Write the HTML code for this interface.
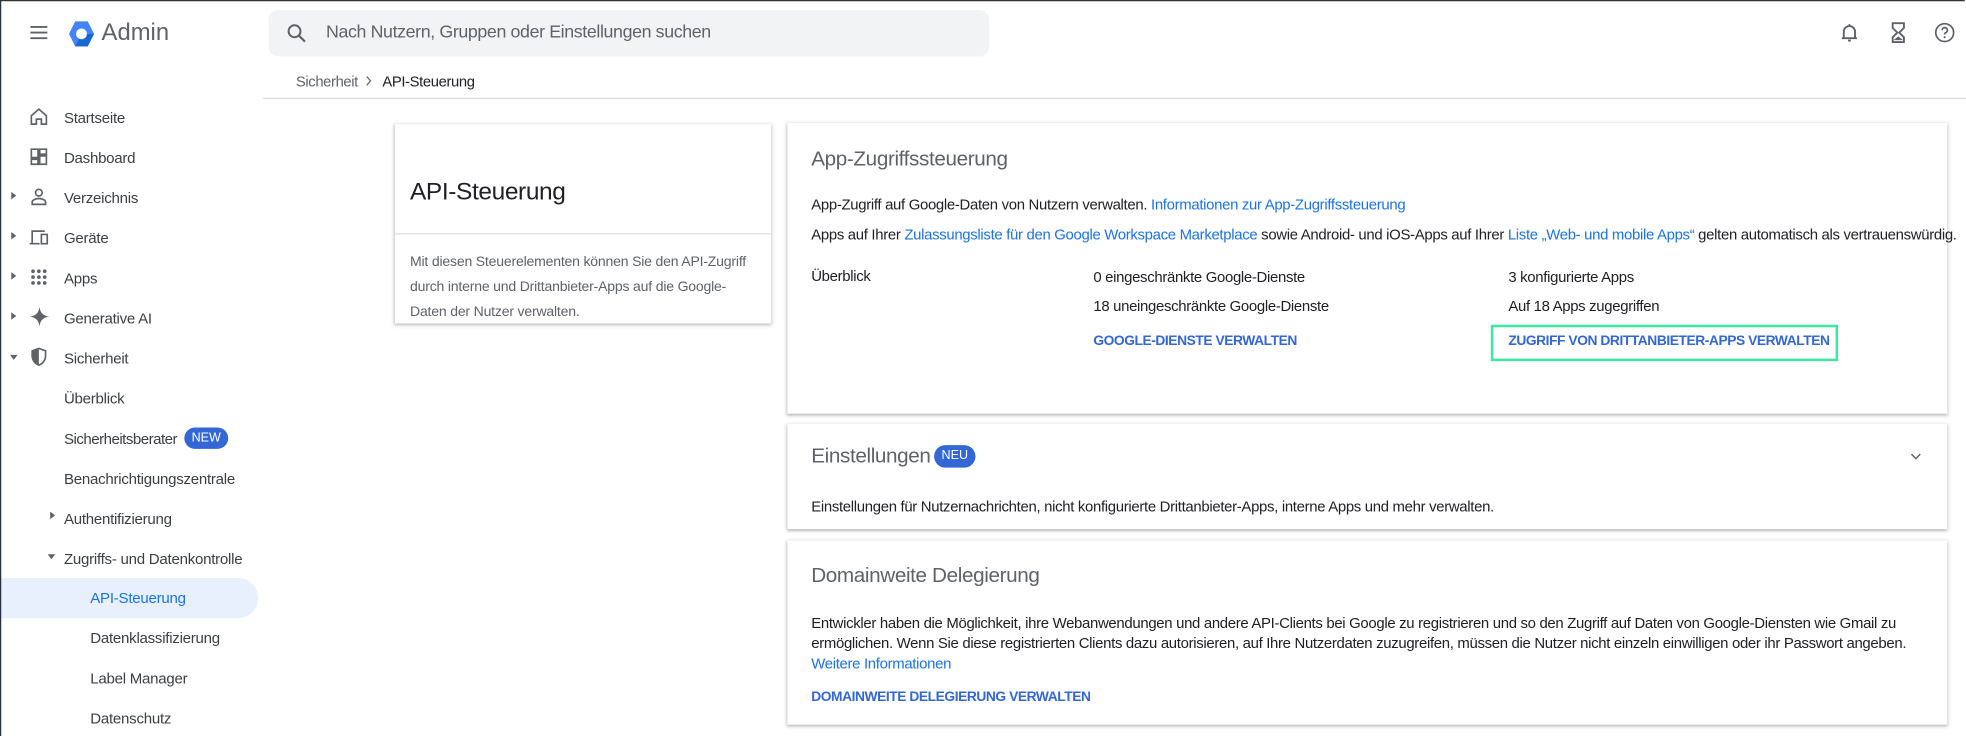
<!DOCTYPE html>
<html><head><meta charset="utf-8">
<style>
html,body{margin:0;padding:0;background:#fff;overflow:hidden}
body{width:1966px;height:737px;position:relative}
#w{position:absolute;left:0;top:0;width:1568px;height:588px;transform:scale(1.25383);transform-origin:0 0;font-family:"Liberation Sans",sans-serif;color:#202124}
.a{position:absolute;white-space:nowrap}
.frame{position:absolute;left:0;top:0;width:1566px;height:586px;border-top:1px solid #333;border-left:1.5px solid #2a3340;pointer-events:none}
.nav{font-size:12px;color:#3c4043;line-height:16px;letter-spacing:-0.2px}
.ic{position:absolute}
.tri{position:absolute;width:0;height:0;border-top:3.5px solid transparent;border-bottom:3.5px solid transparent;border-left:4px solid #5f6368}
.trid{position:absolute;width:0;height:0;border-left:3.5px solid transparent;border-right:3.5px solid transparent;border-top:4px solid #5f6368}
.card{position:absolute;background:#fff;box-shadow:0 1px 2px rgba(60,64,67,.3),0 1px 3px 1px rgba(60,64,67,.15)}
.t{font-size:11.9px;color:#202124;letter-spacing:-0.25px}
.lk{color:#1a73e8}
.btn{font-size:11px;font-weight:bold;color:#3367d6;letter-spacing:-0.35px}
.h{font-size:16.5px;color:#5f6368;letter-spacing:-0.3px}
.badge{position:absolute;background:#3367d6;color:#fff;font-size:10px;border-radius:9px;text-align:center}
</style></head><body>
<div id="w">
<!-- top bar -->
<svg class="ic" style="left:22px;top:17px" width="18" height="18" viewBox="0 0 24 24"><path d="M3 6h18M3 12h18M3 18h18" stroke="#5f6368" stroke-width="2"/></svg>
<svg class="ic" style="left:53px;top:15px" width="24" height="24" viewBox="0 0 24 24"><polygon points="7,2 17,2 22,12 17,22 7,22 2,12" fill="#4285f4"/><polygon points="12,12 22,12 17,22 7,22" fill="#1967d2"/><circle cx="12" cy="12" r="4.3" fill="#fff"/></svg>
<div class="a" style="left:81px;top:16px;font-size:19px;color:#5f6368">Admin</div>
<div class="a" style="left:214px;top:8px;width:575px;height:37px;background:#f1f3f4;border-radius:8px"></div>
<svg class="ic" style="left:227px;top:17px" width="19" height="19" viewBox="0 0 24 24"><circle cx="10" cy="10" r="6" fill="none" stroke="#5f6368" stroke-width="2"/><path d="M14.5 14.5l6 6" stroke="#5f6368" stroke-width="2.2"/></svg>
<div class="a" style="left:260px;top:18px;font-size:14.2px;color:#5f6368;letter-spacing:-0.3px">Nach Nutzern, Gruppen oder Einstellungen suchen</div>
<svg class="ic" style="left:1466px;top:17px" width="18" height="18" viewBox="0 0 24 24"><path d="M6 18V11a6 6 0 0 1 12 0v7M4 18h16M12 4v-1M10.5 20.5h3" fill="none" stroke="#5f6368" stroke-width="2"/></svg>
<svg class="ic" style="left:1505px;top:17px" width="18" height="18" viewBox="0 0 24 24"><path d="M6 2h12v5l-5 5 5 5v5H6v-5l5-5-5-5z" fill="none" stroke="#5f6368" stroke-width="2"/><path d="M7 20l5-4 5 4z" fill="#5f6368"/></svg>
<svg class="ic" style="left:1542px;top:17px" width="18" height="18" viewBox="0 0 24 24"><circle cx="12" cy="12" r="9.5" fill="none" stroke="#5f6368" stroke-width="1.8"/><path d="M9.3 9.5a2.8 2.8 0 1 1 3.8 2.6c-.8.4-1.1.9-1.1 1.9" fill="none" stroke="#5f6368" stroke-width="1.8"/><circle cx="12" cy="17" r="1.1" fill="#5f6368"/></svg>
<!-- breadcrumb -->
<div class="a" style="left:236px;top:58px;font-size:11.8px;color:#5f6368;letter-spacing:-0.3px">Sicherheit</div>
<svg class="ic" style="left:290px;top:60px" width="8" height="9" viewBox="0 0 8 9"><path d="M2.5 1l3 3.5-3 3.5" fill="none" stroke="#5f6368" stroke-width="1"/></svg>
<div class="a" style="left:305px;top:58px;font-size:11.8px;color:#202124;letter-spacing:-0.3px">API-Steuerung</div>
<div class="a" style="left:210px;top:78px;width:1358px;height:1px;background:#dadce0"></div>
<!-- sidebar -->
<svg class="ic" style="left:23px;top:85px" width="16" height="16" viewBox="0 0 24 24"><path d="M3 11L12 3l9 8v10h-6v-6H9v6H3z" fill="none" stroke="#5f6368" stroke-width="2"/></svg>
<div class="a nav" style="left:51px;top:86px">Startseite</div>
<svg class="ic" style="left:23px;top:117px" width="16" height="16" viewBox="0 0 24 24"><path d="M3 3h8v10H3zM13 3h8v6h-8zM13 11h8v10h-8zM3 15h8v6H3z" fill="none" stroke="#5f6368" stroke-width="2"/></svg>
<div class="a nav" style="left:51px;top:118px">Dashboard</div>
<div class="tri" style="left:9px;top:153px"></div>
<svg class="ic" style="left:23px;top:149px" width="16" height="16" viewBox="0 0 24 24"><circle cx="12" cy="7" r="4" fill="none" stroke="#5f6368" stroke-width="2"/><path d="M4 21v-3c0-2 4-4 8-4s8 2 8 4v3z" fill="none" stroke="#5f6368" stroke-width="2"/></svg>
<div class="a nav" style="left:51px;top:150px">Verzeichnis</div>
<div class="tri" style="left:9px;top:185px"></div>
<svg class="ic" style="left:23px;top:181px" width="16" height="16" viewBox="0 0 24 24"><path d="M4 19V5h15M1 20h12M15 9h7v11h-7z" fill="none" stroke="#5f6368" stroke-width="2"/></svg>
<div class="a nav" style="left:51px;top:182px">Geräte</div>
<div class="tri" style="left:9px;top:217px"></div>
<svg class="ic" style="left:23px;top:213px" width="16" height="16" viewBox="0 0 24 24" fill="#5f6368"><circle cx="5" cy="5" r="2.2"/><circle cx="12" cy="5" r="2.2"/><circle cx="19" cy="5" r="2.2"/><circle cx="5" cy="12" r="2.2"/><circle cx="12" cy="12" r="2.2"/><circle cx="19" cy="12" r="2.2"/><circle cx="5" cy="19" r="2.2"/><circle cx="12" cy="19" r="2.2"/><circle cx="19" cy="19" r="2.2"/></svg>
<div class="a nav" style="left:51px;top:214px">Apps</div>
<div class="tri" style="left:9px;top:249px"></div>
<svg class="ic" style="left:23px;top:244px" width="17" height="17" viewBox="0 0 24 24"><path d="M12 1C13 8 16 11 23 12 16 13 13 16 12 23 11 16 8 13 1 12 8 11 11 8 12 1z" fill="#5f6368"/></svg>
<div class="a nav" style="left:51px;top:246px">Generative AI</div>
<div class="trid" style="left:8px;top:283px"></div>
<svg class="ic" style="left:23px;top:276px" width="16" height="17" viewBox="0 0 24 24"><path d="M12 2l8 3v6c0 5-3.5 9.5-8 11-4.5-1.5-8-6-8-11V5z" fill="none" stroke="#5f6368" stroke-width="2"/><path d="M12 2v20c-4.5-1.5-8-6-8-11V5z" fill="#5f6368"/></svg>
<div class="a nav" style="left:51px;top:278px">Sicherheit</div>
<div class="a nav" style="left:51px;top:310px">Überblick</div>
<div class="a nav" style="left:51px;top:342px;letter-spacing:-0.4px">Sicherheitsberater</div>
<div class="badge" style="left:147px;top:341px;width:35px;height:17px;line-height:17px">NEW</div>
<div class="a nav" style="left:51px;top:374px">Benachrichtigungszentrale</div>
<div class="tri" style="left:40px;top:408px"></div>
<div class="a nav" style="left:51px;top:406px">Authentifizierung</div>
<div class="trid" style="left:38px;top:442px"></div>
<div class="a nav" style="left:51px;top:438px">Zugriffs- und Datenkontrolle</div>
<div class="a" style="left:0;top:461px;width:206px;height:32px;background:#e8f0fe;border-radius:0 16px 16px 0"></div>
<div class="a nav" style="left:72px;top:469px;color:#1a73e8">API-Steuerung</div>
<div class="a nav" style="left:72px;top:501px">Datenklassifizierung</div>
<div class="a nav" style="left:72px;top:533px">Label Manager</div>
<div class="a nav" style="left:72px;top:565px">Datenschutz</div>
<!-- left card -->
<div class="card" style="left:315px;top:99px;width:300px;height:159px"></div>
<div class="a" style="left:327px;top:142px;font-size:19.5px;color:#202124;letter-spacing:-0.3px">API-Steuerung</div>
<div class="a" style="left:315px;top:186px;width:300px;height:1px;background:#e0e0e0"></div>
<div class="a" style="left:327px;top:199px;font-size:11.2px;line-height:20px;color:#5f6368;letter-spacing:-0.15px">Mit diesen Steuerelementen können Sie den API-Zugriff<br>durch interne und Drittanbieter-Apps auf die Google-<br>Daten der Nutzer verwalten.</div>
<!-- card 1 -->
<div class="card" style="left:628px;top:98px;width:925px;height:232px"></div>
<div class="a h" style="left:647px;top:118px">App-Zugriffssteuerung</div>
<div class="a t" style="left:647px;top:156px">App-Zugriff auf Google-Daten von Nutzern verwalten. <span class="lk">Informationen zur App-Zugriffssteuerung</span></div>
<div class="a t" style="left:647px;top:180px">Apps auf Ihrer <span class="lk">Zulassungsliste für den Google Workspace Marketplace</span> sowie Android- und iOS-Apps auf Ihrer <span class="lk">Liste „Web- und mobile Apps“</span> gelten automatisch als vertrauenswürdig.</div>
<div class="a t" style="left:647px;top:213px">Überblick</div>
<div class="a t" style="left:872px;top:214px">0 eingeschränkte Google-Dienste</div>
<div class="a t" style="left:872px;top:237px">18 uneingeschränkte Google-Dienste</div>
<div class="a btn" style="left:872px;top:266px">GOOGLE-DIENSTE VERWALTEN</div>
<div class="a t" style="left:1203px;top:214px">3 konfigurierte Apps</div>
<div class="a t" style="left:1203px;top:237px">Auf 18 Apps zugegriffen</div>
<div class="a" style="left:1189px;top:259px;width:273px;height:25px;border:2px solid #3de8a0"></div>
<div class="a btn" style="left:1203px;top:266px">ZUGRIFF VON DRITTANBIETER-APPS VERWALTEN</div>
<!-- card 2 -->
<div class="card" style="left:628px;top:338px;width:925px;height:84px"></div>
<div class="a h" style="left:647px;top:355px">Einstellungen</div>
<div class="badge" style="left:745px;top:355px;width:33px;height:18px;line-height:18px">NEU</div>
<svg class="ic" style="left:1521px;top:357px" width="14" height="14" viewBox="0 0 24 24"><path d="M6 9l6 6 6-6" fill="none" stroke="#5f6368" stroke-width="2"/></svg>
<div class="a t" style="left:647px;top:397px">Einstellungen für Nutzernachrichten, nicht konfigurierte Drittanbieter-Apps, interne Apps und mehr verwalten.</div>
<!-- card 3 -->
<div class="card" style="left:628px;top:431px;width:925px;height:147px"></div>
<div class="a h" style="left:647px;top:450px">Domainweite Delegierung</div>
<div class="a t" style="left:647px;top:489px;line-height:16px">Entwickler haben die Möglichkeit, ihre Webanwendungen und andere API-Clients bei Google zu registrieren und so den Zugriff auf Daten von Google-Diensten wie Gmail zu<br>ermöglichen. Wenn Sie diese registrierten Clients dazu autorisieren, auf Ihre Nutzerdaten zuzugreifen, müssen die Nutzer nicht einzeln einwilligen oder ihr Passwort angeben.<br><span class="lk">Weitere Informationen</span></div>
<div class="a btn" style="left:647px;top:550px">DOMAINWEITE DELEGIERUNG VERWALTEN</div>
<div class="frame"></div>
</div>
</body></html>
